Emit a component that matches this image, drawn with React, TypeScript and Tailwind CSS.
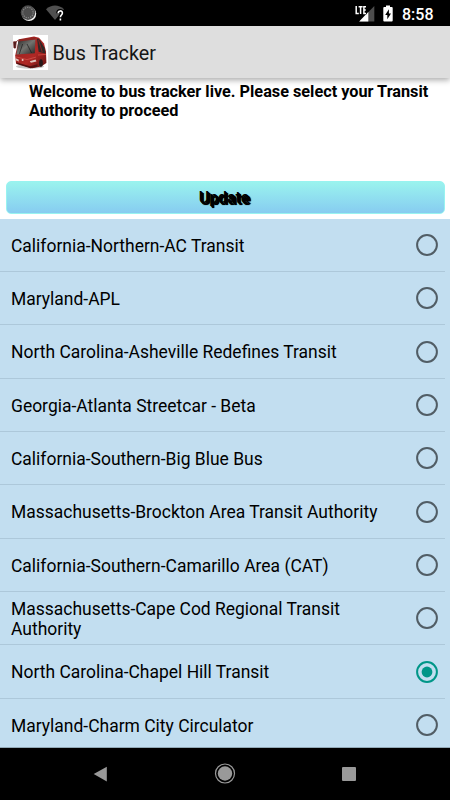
import { useState } from "react"

const authorities = [
  "California-Northern-AC Transit",
  "Maryland-APL",
  "North Carolina-Asheville Redefines Transit",
  "Georgia-Atlanta Streetcar - Beta",
  "California-Southern-Big Blue Bus",
  "Massachusetts-Brockton Area Transit Authority",
  "California-Southern-Camarillo Area (CAT)",
  "Massachusetts-Cape Cod Regional Transit Authority",
  "North Carolina-Chapel Hill Transit",
  "Maryland-Charm City Circulator",
]

function StatusBar() {
  return (
    <div className="flex h-[26px] shrink-0 items-center justify-between bg-black pl-5 pr-[17px]">
      <div className="flex items-center gap-[9px]">
        <svg width="17" height="17" viewBox="0 0 17 17">
          <circle cx="9" cy="8.8" r="7.2" fill="#f4f4f4" />
          <circle cx="8" cy="7.6" r="7.3" fill="#4c4c4c" />
          <circle cx="8" cy="7.6" r="5.2" fill="none" stroke="#8b8b8b" strokeWidth="1.1" strokeDasharray="1.2 1.1" />
        </svg>
        <svg width="18" height="17" viewBox="0 0 18 17">
          <path d="M0 4.2C5.4-.6 12.6-.6 18 4.2L9 15Z" fill="#505050" />
          <path
            d="M12.2 8.2c0-3 4.2-3 4.2-.2 0 2-2 2-2 4.2M14.4 13.6v1.8"
            fill="none"
            stroke="#000"
            strokeWidth="4"
          />
          <path
            d="M12.2 8.2c0-3 4.2-3 4.2-.2 0 2-2 2-2 4.2M14.4 13.6v1.8"
            fill="none"
            stroke="#fff"
            strokeWidth="1.6"
          />
        </svg>
      </div>
      <div className="flex items-center">
        <svg width="20" height="17" viewBox="0 0 20 17">
          <path d="M19.3 1v15.5H4.2Z" fill="#4d4d4d" />
          <path d="M13.3 7v9.5H4.2Z" fill="#fff" />
          <path d="M0 0h11.4v9.4H0Z" fill="#000" />
          <path d="M1.2 1v7.4h2.6M3.6 1.7h4M5.6 1.7v7.4M11 1.7H8.9v6.7H11M8.9 5h1.9" fill="none" stroke="#fff" strokeWidth="1.5" />
        </svg>
        <svg className="ml-[8px]" width="10" height="17" viewBox="0 0 10 17">
          <path d="M3 .5h4v1.6h1.8q.9 0 .9.9v12.5q0 .9-.9.9H1.2q-.9 0-.9-.9V3q0-.9.9-.9H3Z" fill="#fff" />
          <path d="M5.9 4.3 2.2 10h2.1v4.2L8 8.5H5.9Z" fill="#000" />
        </svg>
        <span className="ml-[9px] mt-[3px] w-[31px] whitespace-nowrap text-[16px] font-medium leading-none text-white">8:58</span>
      </div>
    </div>
  )
}

function BusLogo() {
  return (
    <svg width="35" height="35" viewBox="0 0 35 35">
      <defs>
        <linearGradient id="body" x1="0" y1="0" x2="1" y2="1">
          <stop offset="0" stopColor="#8e1f1d" />
          <stop offset=".6" stopColor="#b02825" />
          <stop offset="1" stopColor="#5c1010" />
        </linearGradient>
        <linearGradient id="glass" x1="0" y1="0" x2="1" y2="1">
          <stop offset="0" stopColor="#252525" />
          <stop offset=".5" stopColor="#73736f" />
          <stop offset="1" stopColor="#262322" />
        </linearGradient>
      </defs>
      <rect width="35" height="35" fill="#fff" />
      <ellipse cx="17" cy="31.5" rx="14" ry="2.2" fill="#c4c4c4" />
      <path d="M6 4.2 21 1.5l5 1.2 5 5.8 2 8 .4 11.5-5.4 3.6-9 1.6L3 28.4l-.8-8Z" fill="url(#body)" />
      <path d="M5.4 5.4 22.4 4.2 21.8 18.2 3.4 19.4Z" fill="url(#glass)" />
      <path d="M5.6 4.8 22.2 2.8v1.8L5.5 6.4Z" fill="#8e2521" />
      <path d="M24 3.4l2.6 1.4 5 8.2.8 5.4-6.8-1.6Z" fill="#302827" />
      <path d="m25.6 5 3.6 12" stroke="#822523" strokeWidth="1" />
      <path d="M6.4 18.8 9.6 9M18.6 18 14 9" stroke="#1a1a1a" strokeWidth=".7" />
      <path d="M.6 6.8h2.6L2.6 13H1ZM3 7l2.5-2.2" fill="#4a1c1c" stroke="#6d2020" strokeWidth=".8" />
      <path d="M2.6 21.8 14 24.6l9-2.5" fill="none" stroke="#d65850" strokeWidth=".7" />
      <path d="M3 27.2 17 31.2l7.5-2v2.6l-7 1.4L3.6 29Z" fill="#541111" />
      <path d="m2.6 23.2 3 1.4.3 1.9-3.2-1.2ZM16.8 26.2l5.8-1.8.8 2-5.5 1.3Z" fill="#dfc4bd" />
      <circle cx="9.6" cy="25" r="1" fill="#edc6c2" />
      <ellipse cx="28" cy="28" rx="1.9" ry="3.8" fill="#24191a" />
      <path d="m25 20 8-.6" stroke="#d74a41" strokeWidth=".8" />
    </svg>
  )
}

function Radio({ checked }: { checked: boolean }) {
  return (
    <svg className={checked ? "text-[#009688]" : "text-[#515d65]"} width="22" height="22" viewBox="0 0 22 22">
      <circle cx="11" cy="11" r="9.9" fill="none" stroke="currentColor" strokeWidth="2" />
      {checked && <circle cx="11" cy="11" r="5.4" fill="currentColor" />}
    </svg>
  )
}

function NavBar() {
  return (
    <div className="flex h-[52px] shrink-0 items-center justify-between bg-black pl-[93px] pr-[94px]">
      <svg width="14" height="16" viewBox="0 0 14 16">
        <path d="M13.8 .7v14.8L.7 8.1Z" fill="#999" />
      </svg>
      <svg width="22" height="22" viewBox="0 0 22 22">
        <circle cx="11" cy="10.5" r="9.5" fill="none" stroke="#999" strokeWidth="1.2" />
        <circle cx="11" cy="10.5" r="7.2" fill="#999" />
      </svg>
      <div className="size-[14px] rounded-[1px] bg-[#999]" />
    </div>
  )
}

export default function App() {
  const [selected, setSelected] = useState(8)

  return (
    <div className="flex h-[800px] w-[450px] flex-col overflow-hidden bg-white font-['Roboto',sans-serif] text-black">
      <StatusBar />
      <header className="flex h-[52px] shrink-0 items-center gap-[4.5px] bg-[#dedede] pl-[13px] shadow-[0_2px_6px_rgba(0,0,0,0.35)]">
        <BusLogo />
        <h1 className="pt-[4px] text-[19.8px] leading-none text-[#161616]">Bus Tracker</h1>
      </header>

      <p className="h-[102px] shrink-0 whitespace-nowrap pl-[29px] pt-[3.5px] text-[16.25px] font-bold leading-[19px]">
        Welcome to bus tracker live. Please select your Transit
        <br />
        Authority to proceed
      </p>

      <div className="flex h-[39px] shrink-0 pb-[5.5px] pl-[5.5px] pr-[5.5px] pt-[.5px]">
        <button className="h-[33px] w-full rounded-[5px] border border-[#98f3f0] bg-linear-to-b from-[#9af3ee] to-[#87ccf0] pr-[2px] pt-px text-[15.8px] font-medium leading-none [text-shadow:1px_1px_0_#000,2px_2px_0_#000,2px_2px_1px_#000]">
          Update
        </button>
      </div>

      <ul className="min-h-0 flex-1 overflow-hidden border-b border-[#92a9b7] bg-[#c2def0]">
        {authorities.map((name, i) => (
          <li key={name} className="mr-[5px] h-[53.35px] border-b border-[#adc8da] first:h-[53px]">
            <button
              className="flex h-full w-full items-center justify-between pl-[11px] pr-[7px] text-left"
              onClick={() => setSelected(i)}
            >
              <span className="max-w-[385px] pt-[2px] text-[17.48px] leading-[20.5px]">{name}</span>
              <Radio checked={selected === i} />
            </button>
          </li>
        ))}
      </ul>
      <NavBar />
    </div>
  )
}
